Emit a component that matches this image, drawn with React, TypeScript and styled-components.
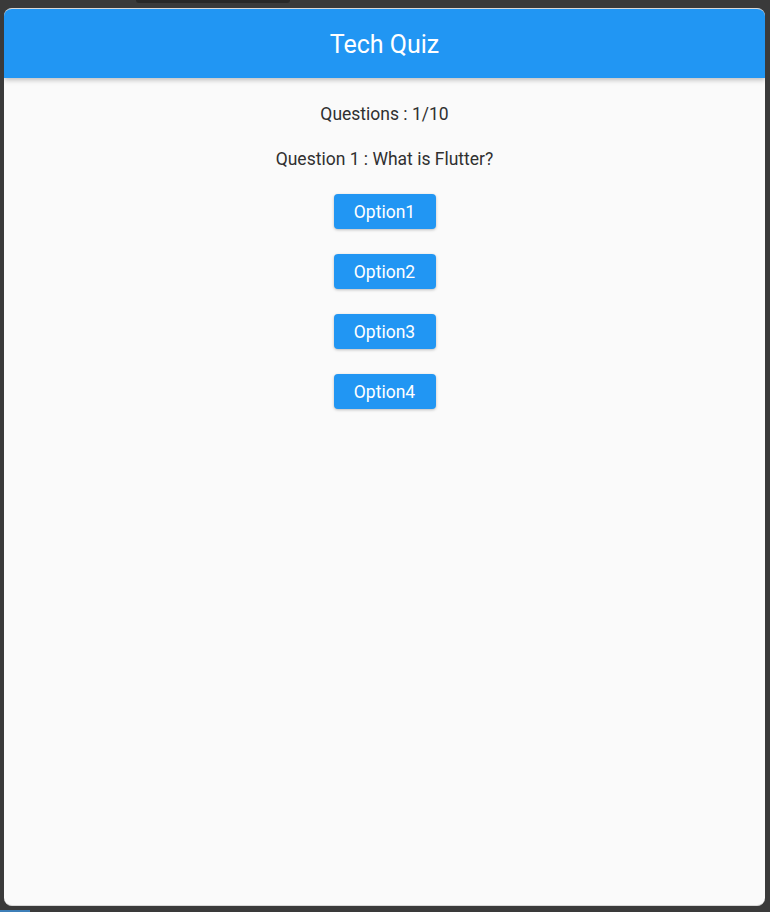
import React from "react";
import styled, { createGlobalStyle } from "styled-components";

const GlobalStyle = createGlobalStyle`
  html, body {
    margin: 0;
    padding: 0;
    background: #3a3a3a;
    font-family: Roboto, "Noto Sans", "Liberation Sans", sans-serif;
  }
`;

const Screen = styled.div`
  width: 770px;
  height: 912px;
  display: flex;
  flex-direction: column;
  background: #3a3a3a;
  overflow: hidden;
`;

const TopStrip = styled.div`
  height: 8px;
  display: flex;
`;

const Notch = styled.div`
  margin-left: 136px;
  width: 154px;
  height: 3px;
  background: #282828;
  border-radius: 0 0 6px 6px;
`;

const Window = styled.div`
  margin: 0 5px 0 4px;
  height: 898px;
  display: flex;
  flex-direction: column;
  background: #fafafa;
  border-radius: 8px;
  border-top: 1px solid #d8d8d8;
  border-bottom: 1px solid #d8d8d8;
  box-sizing: border-box;
  overflow: hidden;
`;

const AppBar = styled.header`
  height: 69px;
  padding-top: 2px;
  box-sizing: border-box;
  flex-shrink: 0;
  display: flex;
  align-items: center;
  justify-content: center;
  background: #2196f3;
  color: #fff;
  font-size: 25px;
  box-shadow: 0 2px 5px rgba(0, 0, 0, 0.25);
  position: relative;
  z-index: 1;
`;

const Body = styled.main`
  flex: 1;
  display: flex;
  flex-direction: column;
  align-items: center;
  padding-top: 24px;
`;

const Label = styled.div<{ $gap: number }>`
  margin-bottom: ${(p) => p.$gap}px;
  font-size: 17.5px;
  line-height: 24px;
  color: #303030;
`;

const OptionButton = styled.button`
  width: 102px;
  height: 35px;
  margin-bottom: 25px;
  border: none;
  border-radius: 4px;
  background: #2196f3;
  color: #fff;
  font-family: Roboto, "Noto Sans", "Liberation Sans", sans-serif;
  font-size: 17.5px;
  cursor: pointer;
  box-shadow: 0 1px 3px rgba(0, 0, 0, 0.25);
`;

const BottomStrip = styled.div`
  height: 6px;
  display: flex;
  align-items: flex-end;
`;

const TaskMark = styled.div`
  width: 30px;
  height: 2px;
  background: #3d7fb8;
`;

const options = ["Option1", "Option2", "Option3", "Option4"];

export default function App() {
  return (
    <>
      <GlobalStyle />
      <Screen>
        <TopStrip>
          <Notch />
        </TopStrip>
        <Window>
          <AppBar>Tech Quiz</AppBar>
          <Body>
            <Label $gap={21}>Questions : 1/10</Label>
            <Label $gap={23}>Question 1 : What is Flutter?</Label>
            {options.map((o) => (
              <OptionButton key={o}>{o}</OptionButton>
            ))}
          </Body>
        </Window>
        <BottomStrip>
          <TaskMark />
        </BottomStrip>
      </Screen>
    </>
  );
}
